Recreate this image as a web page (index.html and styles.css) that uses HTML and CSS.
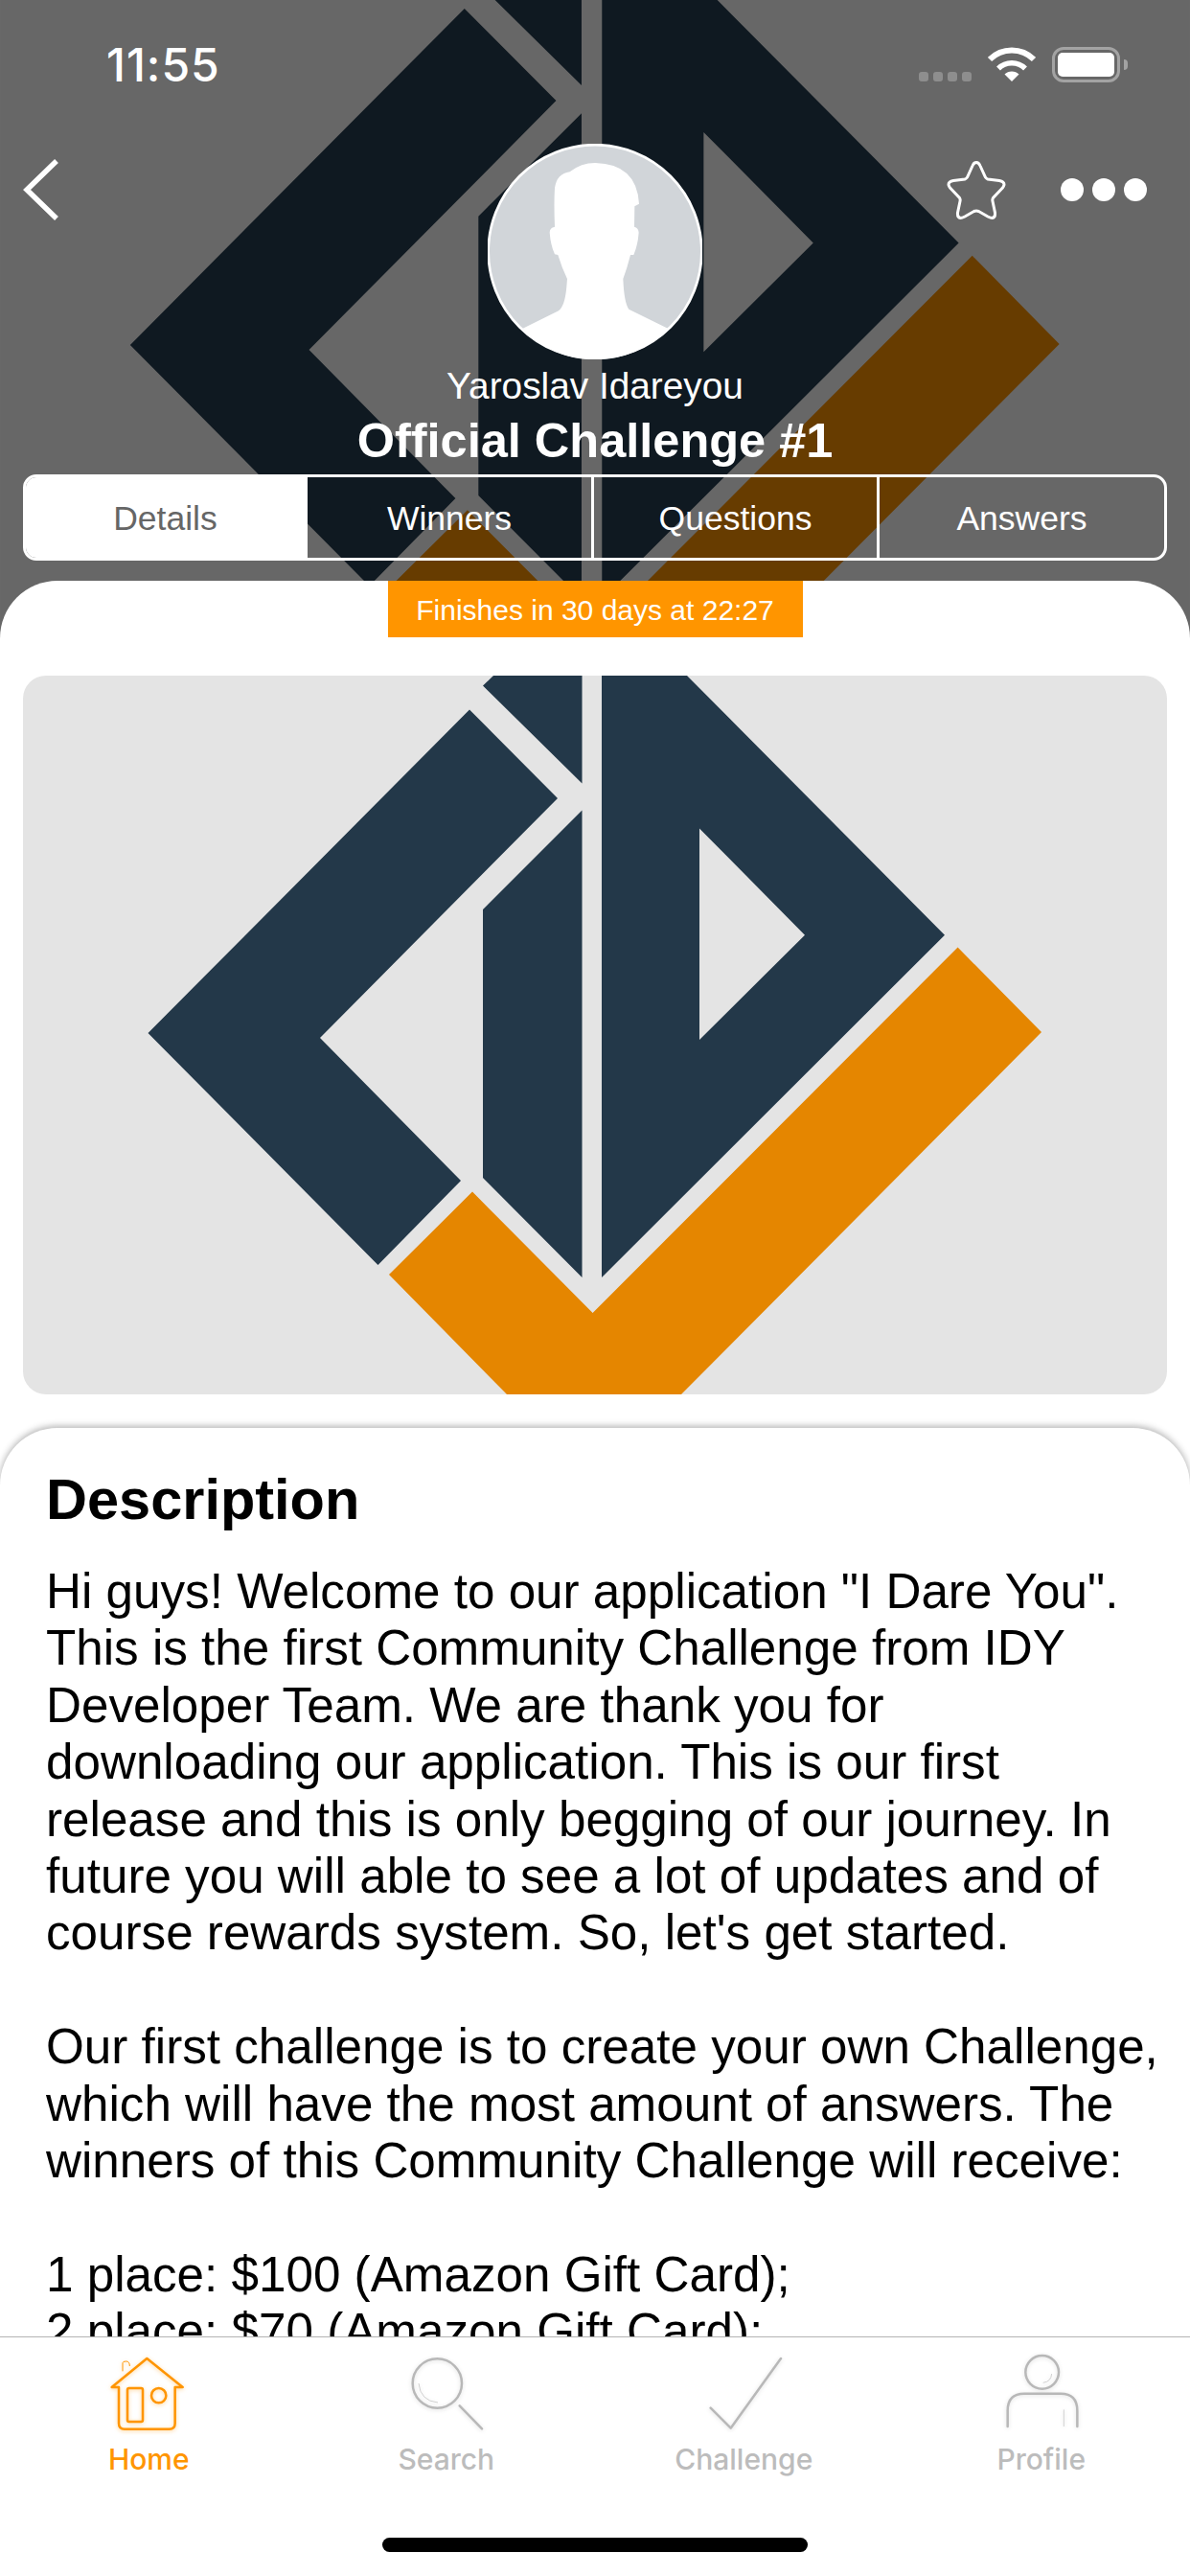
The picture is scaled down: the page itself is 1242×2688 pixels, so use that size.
FILE: index.html
```html
<html>
  <head>
    <link rel="stylesheet" href="styles.css">
    <title>Official Challenge #1</title>
  </head>
  <body>
    <svg class="defs" width="0" height="0">
      <symbol id="logo" viewBox="0 0 1194 750">
        <rect width="1194" height="750" fill="#e4e4e4"/>
        <path fill="#233849" fill-rule="evenodd" d="M466 35.5L558 128L310 378L457 527L370.5 615L130.5 373Z
          M480 10.5L491 0H583.5V112.5Z
          M583.5 140.6L480 244V524L583.5 628Z
          M604 0H693L962 270.7L604 628Z M706 159.5V380L816 270.7Z"/>
        <path fill="#e58600" d="M975.6 283.5L1063 372L687 750H505L382 625L469 538.6L594.6 665Z"/>
      </symbol>
    </svg>

    <div class="screen">
      <div class="content">
        <svg class="hero-bg"><use href="#logo"/></svg>
        <div class="hero-shade"></div>

        <header class="hero">
          <div class="statusbar">
            <span class="time">11:55</span>
            <div class="status-icons">
              <div class="signal"><i></i><i></i><i></i><i></i></div>
              <svg class="wifi" viewBox="0 0 50 36">
                <path d="M2 13A32.5 32.5 0 0 1 48 13" fill="none" stroke="#fff" stroke-width="6"/>
                <path d="M11 22.5A19.8 19.8 0 0 1 39 22.5" fill="none" stroke="#fff" stroke-width="5.5"/>
                <path d="M25 36L17.5 28.5A10.6 10.6 0 0 1 32.5 28.5Z" fill="#fff"/>
              </svg>
              <div class="battery"><div class="battery-level"></div></div>
              <div class="battery-nub"></div>
            </div>
          </div>

          <div class="navrow">
            <svg class="back" viewBox="0 0 38 66">
              <path d="M35 3L4 33L35 63" fill="none" stroke="#fff" stroke-width="5.5"/>
            </svg>
            <svg class="avatar" viewBox="208 62 672 675">
              <circle cx="544" cy="399.5" r="334" fill="#d1d5d9" stroke="#fff" stroke-width="8"/>
              <path fill="#fff" d="M318 640L430 585Q450 570 455 510L457 485Q440 450 428 410L418 408Q405 380 402 340Q402 325 418 322Q415 250 418 200Q425 155 465 150Q500 122 545 122Q675 125 682 250L668 258L667 322Q680 325 681 340Q678 380 665 410L655 410Q645 450 632 485Q635 560 650 580L772 640Q680 737 544 737Q410 737 318 640Z"/>
            </svg>
            <div class="nav-actions">
              <svg class="star" viewBox="0 0 62 62">
                <path d="M31 2.5Q33.5 2.5 35 6L40.5 18Q41.500 19.500 43 20L55 21.500Q60 22.500 60 25.500Q60 27.500 57 30.500L48.500 39.500Q47.500 41 48 43L50.500 55Q51 60 47.500 60.500Q46 60.500 43 59L33.500 53.500Q31 52.500 28.500 53.500L19 59Q16 60.500 14.500 60.500Q11 60 11.500 55L14 43Q14.500 41 13.500 39.500L5 30.500Q2 27.500 2 25.500Q2 22.500 7 21.500L19 20Q20.500 19.500 21.500 18L27 6Q28.500 2.500 31 2.500Z" fill="none" stroke="#fff" stroke-width="3"/>
              </svg>
              <div class="dots"><i></i><i></i><i></i></div>
            </div>
          </div>

          <div class="author">Yaroslav Idareyou</div>
          <h1 class="title">Official Challenge #1</h1>

          <div class="segments">
            <div class="segment active">Details</div>
            <div class="segment">Winners</div>
            <div class="segment">Questions</div>
            <div class="segment">Answers</div>
          </div>
        </header>

        <section class="sheet">
          <div class="badge">Finishes in 30 days at 22:27</div>
          <svg class="cover"><use href="#logo"/></svg>

          <div class="description">
            <h2>Description</h2>
            <p>Hi guys! Welcome to our application "I Dare You". This is the first Community Challenge from IDY Developer Team. We are thank you for downloading our application. This is our first release and this is only begging of our journey. In future you will able to see a lot of updates and of course rewards system. So, let's get started.</p>
            <p>Our first challenge is to create your own Challenge, which will have the most amount of answers. The winners of this Community Challenge will receive:</p>
            <p>1 place: $100 (Amazon Gift Card);<br>2 place: $70 (Amazon Gift Card);</p>
          </div>
        </section>
      </div>

      <nav class="tabbar">
        <div class="tabs">
          <div class="tab current">
            <svg viewBox="105 50 240 240">
              <path class="line" d="M110 152L220 62L332 152H308V265Q308 283 290 283H150Q132 283 132 265V152Z"/>
              <rect class="line" x="159" y="155" width="48" height="105" rx="5"/>
              <circle class="line" cx="257" cy="178" r="23"/>
              <path class="thin" d="M144 102V76Q144 71 155 71Q166 71 166 86"/>
            </svg>
            <span>Home</span>
          </div>
          <div class="tab">
            <svg viewBox="1037 50 240 240">
              <circle class="line" cx="1128" cy="140" r="77"/>
              <path class="line" d="M1198 210L1268 282"/>
              <path class="thin" d="M1070 140Q1075 195 1130 200"/>
            </svg>
            <span>Search</span>
          </div>
          <div class="tab">
            <svg viewBox="168 50 240 240">
              <path class="line" d="M185 217L248 280L405 62"/>
            </svg>
            <span>Challenge</span>
          </div>
          <div class="tab">
            <svg viewBox="1100 50 240 240">
              <circle class="line" cx="1222" cy="105" r="52"/>
              <path class="line" d="M1114 275V225Q1114 172 1166 172H1280Q1332 172 1332 225V275"/>
              <path class="thin" d="M1290 222V275M1252 110Q1250 135 1225 138"/>
            </svg>
            <span>Profile</span>
          </div>
        </div>
        <div class="home-indicator"></div>
      </nav>
    </div>
  </body>
</html>
```

FILE: styles.css
```css
/* Challenge details screen */
body {
    margin: 0;
    font-family: "Liberation Sans", Arial, sans-serif;
    background-color: #fff;
}

.defs {
    display: block;
    height: 0;
}

.screen {
    width: 1242px;
    height: 2688px;
    display: flex;
    flex-direction: column;
    overflow: hidden;
    background-color: #fff;
}

.content {
    flex: 1;
    min-height: 0;
    overflow: hidden;
    position: relative;
}

/* Darkened cover behind the header */
.hero-bg {
    position: absolute;
    left: 0;
    top: -28px;
    width: 1242px;
    height: 780px;
}

.hero-shade {
    position: absolute;
    left: 0;
    top: 0;
    width: 1242px;
    height: 752px;
    background-color: rgba(0, 0, 0, 0.55);
}

.hero {
    position: relative;
    height: 606px;
    color: #fff;
}

/* Status bar */
.statusbar {
    height: 150px;
    box-sizing: border-box;
    padding: 40px 65px 0 111px;
    display: flex;
    justify-content: space-between;
    align-items: flex-start;
}

.time {
    font-family: Inter, sans-serif;
    font-weight: 500;
    font-size: 48px;
    letter-spacing: 1px;
    line-height: 56px;
}

.status-icons {
    display: flex;
    align-items: flex-start;
    margin-top: 9px;
}

.signal {
    display: flex;
    gap: 5px;
    margin-top: 26px;
    margin-right: 17px;
}

.signal i {
    width: 10px;
    height: 10px;
    border-radius: 3px;
    background-color: #8e8e8e;
}

.wifi {
    width: 50px;
    height: 36px;
    margin-right: 17px;
}

.battery {
    width: 71px;
    height: 37px;
    box-sizing: border-box;
    border: 3px solid #a3a3a3;
    border-radius: 12px;
    padding: 3px;
}

.battery-level {
    height: 100%;
    background-color: #fff;
    border-radius: 5px;
}

.battery-nub {
    width: 4px;
    height: 11px;
    margin: 13px 0 0 4px;
    background-color: #a3a3a3;
    border-radius: 0 4px 4px 0;
}

/* Back, avatar, actions */
.navrow {
    display: grid;
    grid-template-columns: 1fr 224px 1fr;
    height: 226px;
}

.back {
    width: 38px;
    height: 66px;
    margin: 15px 0 0 24px;
}

.avatar {
    width: 224px;
    height: 225px;
}

.nav-actions {
    display: flex;
    justify-content: flex-end;
    align-items: flex-start;
    padding-right: 45px;
}

.star {
    width: 62px;
    height: 62px;
    margin: 17px 57px 0 0;
}

.dots {
    display: flex;
    gap: 9px;
    margin-top: 36px;
}

.dots i {
    width: 24px;
    height: 24px;
    border-radius: 50%;
    background-color: #fff;
}

.author {
    text-align: center;
    font-size: 38.8px;
    line-height: 50px;
    margin-top: 2px;
}

.title {
    margin: 0;
    text-align: center;
    font-size: 50.5px;
    line-height: 58px;
    font-weight: bold;
    margin-top: 3px;
}

/* Segmented control */
.segments {
    display: grid;
    grid-template-columns: 294px 299px 298px 297px;
    height: 90px;
    box-sizing: border-box;
    margin: 6px 24px 0;
    border: 3px solid #fff;
    border-radius: 14px;
    overflow: hidden;
}

.segment {
    display: flex;
    align-items: center;
    justify-content: center;
    padding-top: 2px;
    font-size: 35.5px;
    border-right: 3px solid #fff;
}

.segment:last-child {
    border-right: 0;
}

.segment.active {
    background-color: #fff;
    color: #666;
}

/* White sheet */
.sheet {
    position: relative;
    background-color: #fff;
    border-radius: 60px 60px 0 0;
    display: flex;
    flex-direction: column;
    align-items: center;
}

.badge {
    width: 433px;
    height: 59px;
    box-sizing: border-box;
    padding-top: 2px;
    display: flex;
    align-items: center;
    justify-content: center;
    background-color: #ff9500;
    color: #fff;
    font-size: 30px;
}

.cover {
    width: 1194px;
    height: 750px;
    margin-top: 40px;
    border-radius: 24px;
    flex: none;
}

.description {
    align-self: stretch;
    margin-top: 35px;
    padding: 41px 30px 40px 48px;
    background-color: #fff;
    border-radius: 60px 60px 0 0;
    box-shadow: 0 -2px 7px rgba(0, 0, 0, 0.3);
}

.description h2 {
    margin: 0 0 32px;
    font-size: 59.5px;
    line-height: 68px;
    font-weight: bold;
    color: #000;
}

.description p {
    margin: 0 0 59.4px;
    font-size: 51.2px;
    line-height: 59.4px;
    color: #000;
}

/* Bottom tab bar */
.tabbar {
    flex: none;
    height: 250px;
    box-sizing: border-box;
    border-top: 1px solid #b4b4b4;
    background-color: #fff;
    display: flex;
    flex-direction: column;
    align-items: center;
}

.tabs {
    align-self: stretch;
    display: grid;
    grid-template-columns: repeat(4, 1fr);
    padding-top: 18px;
}

.tab {
    display: flex;
    flex-direction: column;
    align-items: center;
    color: #bcbcbc;
    font-family: Inter, sans-serif;
    font-weight: 500;
    font-size: 30px;
    line-height: 34px;
}

.tab svg {
    width: 80px;
    height: 80px;
    overflow: visible;
    margin-bottom: 12px;
    filter: drop-shadow(0 1px 2px rgba(0, 0, 0, 0.12));
}

.tab .line {
    fill: none;
    stroke: #b8b8b8;
    stroke-width: 7.5;
    stroke-linejoin: round;
    stroke-linecap: round;
}

.tab .thin {
    fill: none;
    stroke: #d0d0d0;
    stroke-width: 3;
}

.tab.current {
    color: #ff9500;
}

.tab.current svg {
    filter: drop-shadow(0 1px 2px rgba(255, 149, 0, 0.4));
}

.tab.current .line,
.tab.current .thin {
    stroke: #ff9500;
}

.home-indicator {
    width: 444px;
    height: 15px;
    margin-top: auto;
    margin-bottom: 25px;
    background-color: #000;
    border-radius: 8px;
}
```
